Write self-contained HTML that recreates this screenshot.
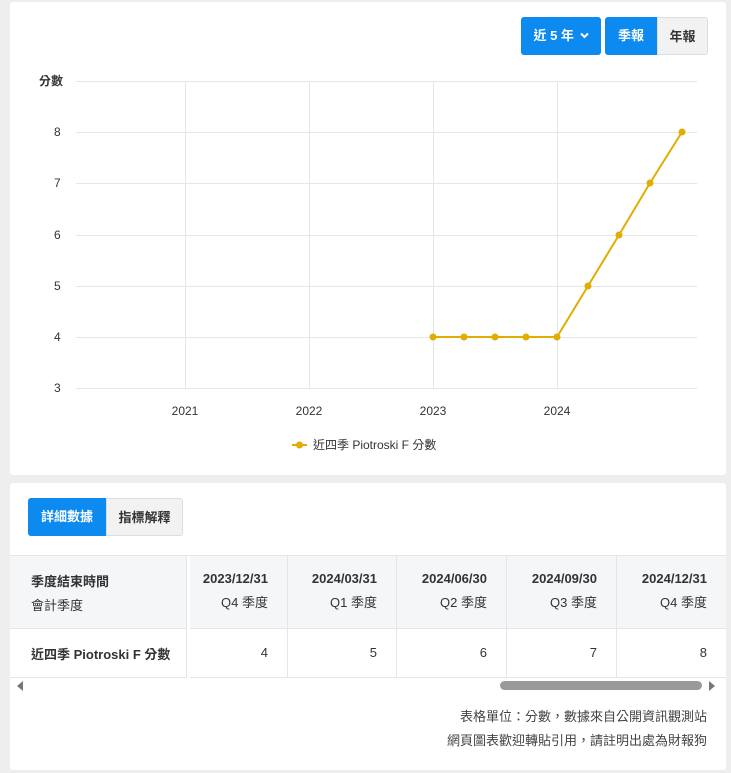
<!DOCTYPE html>
<html><head><meta charset="utf-8"><style>
body{margin:0;background:#eeeeee;width:731px;height:773px;font-family:"Liberation Sans","Noto Sans CJK TC",sans-serif;color:#333;position:relative;overflow:hidden}
.card{position:absolute;left:10px;width:716px;background:#fff;border-radius:3px}
.btn{position:absolute;height:38px;line-height:38px;font-size:13px;font-weight:bold;text-align:center;box-sizing:border-box}
.b{background:#0d8af0;color:#fff}
.g{background:#f2f2f2;color:#333;border:1px solid #ddd}
.t{position:absolute;font-size:13px}
.cell{position:absolute;box-sizing:border-box;border-right:1px solid #e3e6ea;border-bottom:1px solid #e3e6ea;text-align:right;padding-right:19px;font-size:13px}
</style></head><body>
<div class="card" style="top:2px;height:473px"></div>
<div class="card" style="top:483px;height:287px"></div>
<div class="btn b" style="left:521px;top:17px;width:80px;border-radius:3px">近 5 年 <svg width="9" height="7" viewBox="0 0 9 7" style="vertical-align:1px;margin-left:2px"><polyline points="1,1.5 4.5,5 8,1.5" fill="none" stroke="#fff" stroke-width="2"/></svg></div>
<div class="btn b" style="left:605px;top:17px;width:52px;border-radius:3px 0 0 3px">季報</div>
<div class="btn g" style="left:657px;top:17px;width:51px;border-radius:0 3px 3px 0">年報</div>
<svg style="position:absolute;left:0;top:0" width="731" height="480">
<g stroke="#e6e6e6" stroke-width="1">
<line x1="76" x2="697" y1="81.5" y2="81.5"/><line x1="76" x2="697" y1="132.5" y2="132.5"/><line x1="76" x2="697" y1="183.5" y2="183.5"/><line x1="76" x2="697" y1="235.5" y2="235.5"/><line x1="76" x2="697" y1="286.5" y2="286.5"/><line x1="76" x2="697" y1="337.5" y2="337.5"/><line x1="76" x2="697" y1="388.5" y2="388.5"/>
<line x1="185.5" x2="185.5" y1="81" y2="388"/><line x1="309.5" x2="309.5" y1="81" y2="388"/><line x1="433.5" x2="433.5" y1="81" y2="388"/><line x1="557.5" x2="557.5" y1="81" y2="388"/>
</g>
<g font-size="12" fill="#333" font-family="Liberation Sans,Noto Sans CJK TC,sans-serif">
<text x="39" y="85" font-weight="bold" font-size="12">分數</text>
<text x="54" y="136">8</text><text x="54" y="187">7</text><text x="54" y="239">6</text><text x="54" y="290">5</text><text x="54" y="341">4</text><text x="54" y="392">3</text>
<text x="185" y="415" text-anchor="middle">2021</text><text x="309" y="415" text-anchor="middle">2022</text><text x="433" y="415" text-anchor="middle">2023</text><text x="557" y="415" text-anchor="middle">2024</text>
<text x="313" y="449">近四季 Piotroski F 分數</text>
</g>
<line x1="292" x2="307" y1="445" y2="445" stroke="#e0ad00" stroke-width="2"/><circle cx="299.5" cy="445" r="3.5" fill="#e0ad00"/>
<polyline fill="none" stroke="#e0ad00" stroke-width="2" points="433,337 464,337 495,337 526,337 557,337 588,286 619,235 650,183 682,132"/>
<g fill="#e0ad00"><circle cx="433" cy="337" r="3.5"/><circle cx="464" cy="337" r="3.5"/><circle cx="495" cy="337" r="3.5"/><circle cx="526" cy="337" r="3.5"/><circle cx="557" cy="337" r="3.5"/><circle cx="588" cy="286" r="3.5"/><circle cx="619" cy="235" r="3.5"/><circle cx="650" cy="183" r="3.5"/><circle cx="682" cy="132" r="3.5"/></g>
</svg>
<div class="btn b" style="left:28px;top:498px;width:78px;border-radius:3px 0 0 3px">詳細數據</div>
<div class="btn g" style="left:106px;top:498px;width:77px;border-radius:0 3px 3px 0">指標解釋</div>
<div style="position:absolute;left:10px;top:555px;width:716px;height:1px;background:#e3e6ea"></div>
<div style="position:absolute;left:10px;top:556px;width:176px;height:72px;background:#f4f6f8;border-bottom:1px solid #e3e6ea;border-right:1px solid #e3e6ea"></div>
<div class="t" style="left:31px;top:571px;font-weight:bold">季度結束時間</div>
<div class="t" style="left:31px;top:595px">會計季度</div>
<div style="position:absolute;left:10px;top:629px;width:176px;height:48px;border-bottom:1px solid #e3e6ea;border-right:1px solid #e3e6ea"></div>
<div class="t" style="left:31px;top:644px;font-weight:bold">近四季 Piotroski F 分數</div>
<div class="cell" style="left:190px;top:556px;width:98px;height:73px;background:#f4f6f8;padding-top:11px;line-height:24px"><b>2023/12/31</b><br>Q4 季度</div>
<div class="cell" style="left:288px;top:556px;width:109px;height:73px;background:#f4f6f8;padding-top:11px;line-height:24px"><b>2024/03/31</b><br>Q1 季度</div>
<div class="cell" style="left:397px;top:556px;width:110px;height:73px;background:#f4f6f8;padding-top:11px;line-height:24px"><b>2024/06/30</b><br>Q2 季度</div>
<div class="cell" style="left:507px;top:556px;width:110px;height:73px;background:#f4f6f8;padding-top:11px;line-height:24px"><b>2024/09/30</b><br>Q3 季度</div>
<div class="cell" style="left:617px;top:556px;width:109px;height:73px;background:#f4f6f8;padding-top:11px;line-height:24px;border-right:none"><b>2024/12/31</b><br>Q4 季度</div>
<div class="cell" style="left:190px;top:629px;width:98px;height:49px;line-height:48px">4</div>
<div class="cell" style="left:288px;top:629px;width:109px;height:49px;line-height:48px">5</div>
<div class="cell" style="left:397px;top:629px;width:110px;height:49px;line-height:48px">6</div>
<div class="cell" style="left:507px;top:629px;width:110px;height:49px;line-height:48px">7</div>
<div class="cell" style="left:617px;top:629px;width:109px;height:49px;line-height:48px;border-right:none">8</div>
<div style="position:absolute;left:17px;top:681px;width:0;height:0;border-top:5px solid transparent;border-bottom:5px solid transparent;border-right:6px solid #777"></div>
<div style="position:absolute;left:709px;top:681px;width:0;height:0;border-top:5px solid transparent;border-bottom:5px solid transparent;border-left:6px solid #777"></div>
<div style="position:absolute;left:500px;top:681px;width:202px;height:9px;border-radius:5px;background:#9a9a9a"></div>
<div class="t" style="right:24px;top:705px;text-align:right;line-height:24px;color:#444">表格單位：分數，數據來自公開資訊觀測站<br>網頁圖表歡迎轉貼引用，請註明出處為財報狗</div>
</body></html>
